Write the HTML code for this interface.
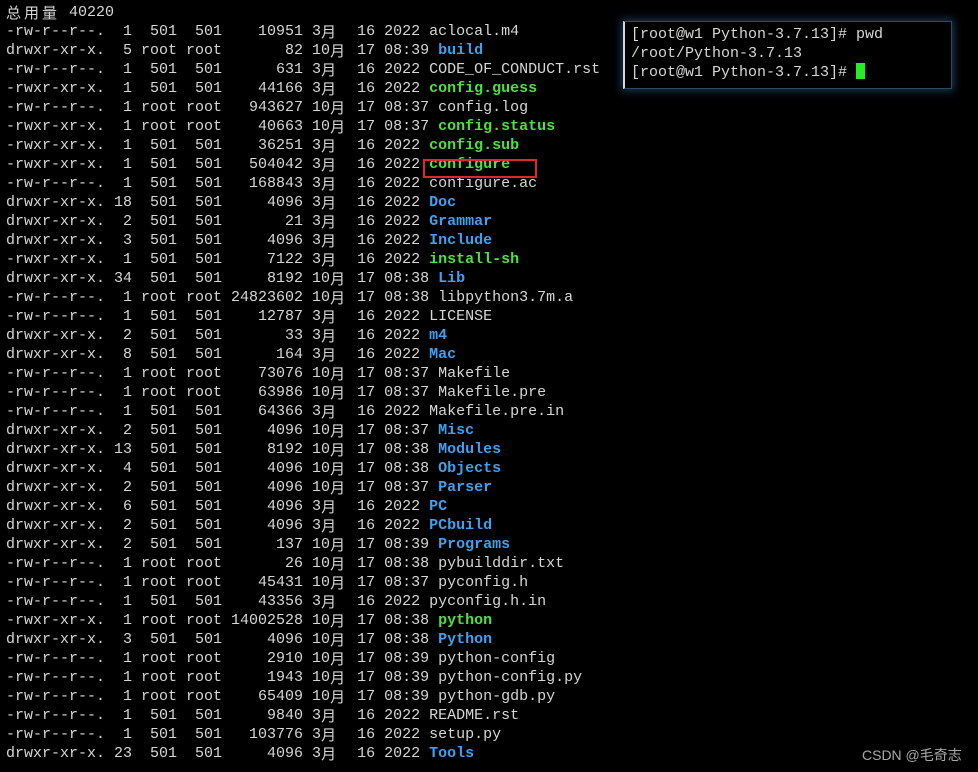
<!DOCTYPE html>
<html><head><meta charset="utf-8"><style>
html,body{margin:0;padding:0;background:#000;width:978px;height:772px;overflow:hidden}
.t{position:absolute;left:6px;top:3px;font-family:"Liberation Mono","Noto Sans CJK SC",monospace;font-size:15px;line-height:19px;color:#d6d6d6;white-space:pre}
.m{display:inline-block;width:18px;font-family:"Noto Sans CJK SC",sans-serif;font-size:15px;line-height:19px;vertical-align:top}
.g{color:#4fe03f;font-weight:bold}
.b{color:#3fa0f0;font-weight:bold}
.box{position:absolute;left:623px;top:21px;width:326px;height:66px;background:#000;border:1px solid #2a4a6a;box-shadow:0 0 8px 2px #1b3550;border-left:2px solid #cfd8e0}
.box .t{left:6px;top:3px}
.cur{display:inline-block;width:9px;height:16px;background:#22ee22;vertical-align:-3px}
.red{position:absolute;left:423px;top:159px;width:110px;height:15px;border:2px solid #e0262a}
.wm{position:absolute;left:862px;top:745px;font-family:"Liberation Sans","Noto Sans CJK SC",sans-serif;font-size:14px;color:#a8a8a8}
</style></head><body>
<div class="t"><span class="m">总</span><span class="m">用</span><span class="m">量</span> 40220
-rw-r--r--.  1  501  501    10951 3<span class="m">月</span>  16 2022 aclocal.m4
drwxr-xr-x.  5 root root       82 10<span class="m">月</span> 17 08:39 <span class="b">build</span>
-rw-r--r--.  1  501  501      631 3<span class="m">月</span>  16 2022 CODE_OF_CONDUCT.rst
-rwxr-xr-x.  1  501  501    44166 3<span class="m">月</span>  16 2022 <span class="g">config.guess</span>
-rw-r--r--.  1 root root   943627 10<span class="m">月</span> 17 08:37 config.log
-rwxr-xr-x.  1 root root    40663 10<span class="m">月</span> 17 08:37 <span class="g">config.status</span>
-rwxr-xr-x.  1  501  501    36251 3<span class="m">月</span>  16 2022 <span class="g">config.sub</span>
-rwxr-xr-x.  1  501  501   504042 3<span class="m">月</span>  16 2022 <span class="g">configure</span>
-rw-r--r--.  1  501  501   168843 3<span class="m">月</span>  16 2022 configure.ac
drwxr-xr-x. 18  501  501     4096 3<span class="m">月</span>  16 2022 <span class="b">Doc</span>
drwxr-xr-x.  2  501  501       21 3<span class="m">月</span>  16 2022 <span class="b">Grammar</span>
drwxr-xr-x.  3  501  501     4096 3<span class="m">月</span>  16 2022 <span class="b">Include</span>
-rwxr-xr-x.  1  501  501     7122 3<span class="m">月</span>  16 2022 <span class="g">install-sh</span>
drwxr-xr-x. 34  501  501     8192 10<span class="m">月</span> 17 08:38 <span class="b">Lib</span>
-rw-r--r--.  1 root root 24823602 10<span class="m">月</span> 17 08:38 libpython3.7m.a
-rw-r--r--.  1  501  501    12787 3<span class="m">月</span>  16 2022 LICENSE
drwxr-xr-x.  2  501  501       33 3<span class="m">月</span>  16 2022 <span class="b">m4</span>
drwxr-xr-x.  8  501  501      164 3<span class="m">月</span>  16 2022 <span class="b">Mac</span>
-rw-r--r--.  1 root root    73076 10<span class="m">月</span> 17 08:37 Makefile
-rw-r--r--.  1 root root    63986 10<span class="m">月</span> 17 08:37 Makefile.pre
-rw-r--r--.  1  501  501    64366 3<span class="m">月</span>  16 2022 Makefile.pre.in
drwxr-xr-x.  2  501  501     4096 10<span class="m">月</span> 17 08:37 <span class="b">Misc</span>
drwxr-xr-x. 13  501  501     8192 10<span class="m">月</span> 17 08:38 <span class="b">Modules</span>
drwxr-xr-x.  4  501  501     4096 10<span class="m">月</span> 17 08:38 <span class="b">Objects</span>
drwxr-xr-x.  2  501  501     4096 10<span class="m">月</span> 17 08:37 <span class="b">Parser</span>
drwxr-xr-x.  6  501  501     4096 3<span class="m">月</span>  16 2022 <span class="b">PC</span>
drwxr-xr-x.  2  501  501     4096 3<span class="m">月</span>  16 2022 <span class="b">PCbuild</span>
drwxr-xr-x.  2  501  501      137 10<span class="m">月</span> 17 08:39 <span class="b">Programs</span>
-rw-r--r--.  1 root root       26 10<span class="m">月</span> 17 08:38 pybuilddir.txt
-rw-r--r--.  1 root root    45431 10<span class="m">月</span> 17 08:37 pyconfig.h
-rw-r--r--.  1  501  501    43356 3<span class="m">月</span>  16 2022 pyconfig.h.in
-rwxr-xr-x.  1 root root 14002528 10<span class="m">月</span> 17 08:38 <span class="g">python</span>
drwxr-xr-x.  3  501  501     4096 10<span class="m">月</span> 17 08:38 <span class="b">Python</span>
-rw-r--r--.  1 root root     2910 10<span class="m">月</span> 17 08:39 python-config
-rw-r--r--.  1 root root     1943 10<span class="m">月</span> 17 08:39 python-config.py
-rw-r--r--.  1 root root    65409 10<span class="m">月</span> 17 08:39 python-gdb.py
-rw-r--r--.  1  501  501     9840 3<span class="m">月</span>  16 2022 README.rst
-rw-r--r--.  1  501  501   103776 3<span class="m">月</span>  16 2022 setup.py
drwxr-xr-x. 23  501  501     4096 3<span class="m">月</span>  16 2022 <span class="b">Tools</span></div>
<div class="red"></div>
<div class="box"><div class="t">[root@w1 Python-3.7.13]# pwd
/root/Python-3.7.13
[root@w1 Python-3.7.13]# <span class="cur"></span></div></div>
<div class="wm">CSDN @毛奇志</div>
</body></html>
